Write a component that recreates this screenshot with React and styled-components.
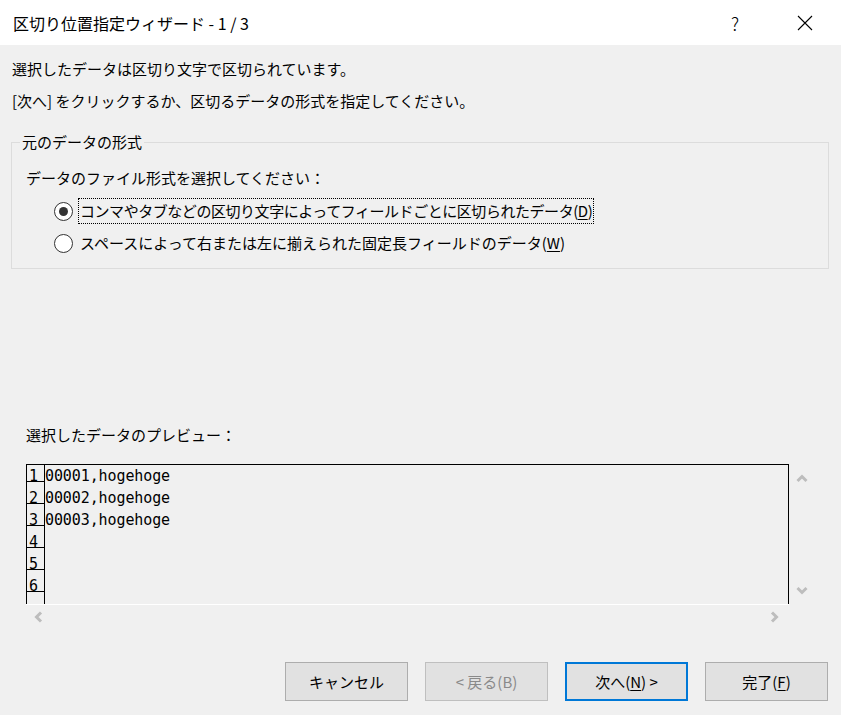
import React from "react";
import styled, { createGlobalStyle } from "styled-components";

const GlobalStyle = createGlobalStyle`
  html, body { margin: 0; padding: 0; }
  body {
    background: #f0f0f0;
    font-family: "Noto Sans CJK JP", "Noto Sans", sans-serif;
    color: #000;
  }
`;

const Window = styled.div`
  width: 841px;
  height: 715px;
  background: #f0f0f0;
  overflow: hidden;
  display: flex;
  flex-direction: column;
`;

const TitleBar = styled.div`
  height: 45px;
  flex: 0 0 45px;
  background: #fff;
  display: flex;
  align-items: center;
`;

const Title = styled.div`
  flex: 1;
  padding-left: 13px;
  font-size: 16px;
  line-height: 22px;
  white-space: pre;
`;

const CaptionButton = styled.div`
  width: ${(p) => p.$w}px;
  height: 45px;
  display: flex;
  align-items: center;
  justify-content: center;
  font-size: 18px;
  font-weight: 300;
  color: #000;
`;

const Body = styled.div`
  display: flex;
  flex-direction: column;
`;

const Message = styled.div`
  padding-left: 12px;
  margin-top: ${(p) => p.$mt}px;
  font-size: 15px;
  line-height: 22px;
  white-space: nowrap;
`;

const Group = styled.fieldset`
  margin: 19px 12px 0 11px;
  padding: 14px 8px 9px 8px;
  border: 1px solid #dcdcdc;
  min-width: 0;
`;

const GroupLegend = styled.legend`
  padding: 0 2px;
  font-size: 15px;
  line-height: 22px;
`;

const GroupLabel = styled.div`
  padding-left: 6px;
  font-size: 15px;
  line-height: 22px;
`;

const RadioList = styled.div`
  margin-top: 6px;
  display: flex;
  flex-direction: column;
`;

const RadioRow = styled.div`
  height: 32px;
  display: flex;
  align-items: center;
  padding-left: 34px;
`;

const RadioCircle = styled.span`
  width: 19px;
  height: 19px;
  box-sizing: border-box;
  border-radius: 50%;
  border: 1.5px solid #333;
  background: #fff;
  display: flex;
  align-items: center;
  justify-content: center;
  flex: 0 0 auto;
  &::after {
    content: "";
    width: 9px;
    height: 9px;
    border-radius: 50%;
    background: ${(p) => (p.$checked ? "#333" : "transparent")};
  }
`;

const RadioLabel = styled.span`
  margin-left: 5px;
  padding: 0 1px;
  font-size: 15px;
  line-height: 24px;
  white-space: nowrap;
  letter-spacing: ${(p) => p.$spacing || 0}px;
  border: 1px ${(p) => (p.$focused ? "dotted #000" : "solid transparent")};
`;

const Key = styled.span`
  text-decoration: underline;
  text-underline-offset: 2px;
`;

const PreviewLabel = styled.div`
  margin-top: 155px;
  padding-left: 26px;
  font-size: 15px;
  line-height: 22px;
`;

const PreviewFrame = styled.div`
  margin: 18px 0 0 26px;
  width: 786px;
  display: grid;
  grid-template-columns: 763px 23px;
  grid-template-rows: 140px 24px;
`;

const PreviewBox = styled.div`
  box-sizing: border-box;
  border: 1px solid #000;
  border-bottom: none;
  overflow: hidden;
`;

const Rows = styled.div`
  margin-top: -5px;
  display: flex;
  flex-direction: column;
`;

const Row = styled.div`
  display: flex;
  height: 22px;
  flex: 0 0 22px;
  font-family: "DejaVu Sans Mono", "Liberation Mono", monospace;
  font-size: 15px;
`;

const RowNum = styled.div`
  width: 18px;
  box-sizing: border-box;
  height: 22px;
  border-right: 1px solid #000;
  border-bottom: 1px solid #000;
  padding: 9px 0 0 2px;
  line-height: 15px;
`;

const RowData = styled.div`
  padding: 9px 0 0 0;
  line-height: 15px;
  white-space: pre;
  letter-spacing: -0.1px;
`;

const VScroll = styled.div`
  display: flex;
  flex-direction: column;
  justify-content: space-between;
  align-items: center;
  padding: 10px 0 9px 3px;
`;

const HScroll = styled.div`
  border-top: 1px solid #fff;
  display: flex;
  justify-content: space-between;
  align-items: center;
  padding: 0 10px 0 8px;
`;

const Footer = styled.div`
  margin-top: 34px;
  display: flex;
  justify-content: flex-end;
  gap: 17px;
  padding-right: 13px;
`;

const Button = styled.div`
  width: 123px;
  height: 39px;
  box-sizing: border-box;
  display: flex;
  align-items: center;
  justify-content: center;
  background: #e1e1e1;
  border: ${(p) => (p.$default ? "2px solid #0078d7" : p.$disabled ? "1px solid #bfbfbf" : "1px solid #adadad")};
  color: ${(p) => (p.$disabled ? "#8a8a8a" : "#000")};
  font-size: 15px;
  line-height: 22px;
  white-space: pre;
`;

const Chevron = ({ dir }) => {
  const pts = {
    up: "1.5,7 6,2.5 10.5,7",
    down: "1.5,2 6,6.5 10.5,2",
    left: "7,1.5 2.5,6 7,10.5",
    right: "2,1.5 6.5,6 2,10.5",
  }[dir];
  const horiz = dir === "left" || dir === "right";
  return (
    <svg width={horiz ? 9 : 12} height={horiz ? 12 : 9} viewBox={horiz ? "0 0 9 12" : "0 0 12 9"}>
      <polyline points={pts} fill="none" stroke="#bdbdbd" strokeWidth="3" strokeLinejoin="miter" />
    </svg>
  );
};

const rows = ["00001,hogehoge", "00002,hogehoge", "00003,hogehoge", "", "", ""];

export default function App() {
  return (
    <>
      <GlobalStyle />
      <Window>
        <TitleBar>
          <Title>区切り位置指定ウィザード - 1 / 3</Title>
          <CaptionButton $w={68}>?</CaptionButton>
          <CaptionButton $w={72}>
            <svg width="16" height="16" viewBox="0 0 16 16">
              <path d="M1 1 L15 15 M15 1 L1 15" stroke="#000" strokeWidth="1.1" fill="none" />
            </svg>
          </CaptionButton>
        </TitleBar>
        <Body>
          <Message $mt={13}>選択したデータは区切り文字で区切られています。</Message>
          <Message $mt={10}>[次へ] をクリックするか、区切るデータの形式を指定してください。</Message>
          <Group>
            <GroupLegend>元のデータの形式</GroupLegend>
            <GroupLabel>データのファイル形式を選択してください：</GroupLabel>
            <RadioList>
              <RadioRow>
                <RadioCircle $checked />
                <RadioLabel $focused $spacing={-0.45}>
                  コンマやタブなどの区切り文字によってフィールドごとに区切られたデータ(<Key>D</Key>)
                </RadioLabel>
              </RadioRow>
              <RadioRow>
                <RadioCircle />
                <RadioLabel>
                  スペースによって右または左に揃えられた固定長フィールドのデータ(<Key>W</Key>)
                </RadioLabel>
              </RadioRow>
            </RadioList>
          </Group>
          <PreviewLabel>選択したデータのプレビュー：</PreviewLabel>
          <PreviewFrame>
            <PreviewBox>
              <Rows>
                {rows.map((r, i) => (
                  <Row key={i}>
                    <RowNum>{i + 1}</RowNum>
                    <RowData>{r}</RowData>
                  </Row>
                ))}
                <Row>
                  <RowNum />
                  <RowData />
                </Row>
              </Rows>
            </PreviewBox>
            <VScroll>
              <Chevron dir="up" />
              <Chevron dir="down" />
            </VScroll>
            <HScroll>
              <Chevron dir="left" />
              <Chevron dir="right" />
            </HScroll>
            <div />
          </PreviewFrame>
          <Footer>
            <Button>キャンセル</Button>
            <Button $disabled>{"< 戻る(B)"}</Button>
            <Button $default>
              次へ(<Key>N</Key>){" >"}
            </Button>
            <Button>
              完了(<Key>F</Key>)
            </Button>
          </Footer>
        </Body>
      </Window>
    </>
  );
}
